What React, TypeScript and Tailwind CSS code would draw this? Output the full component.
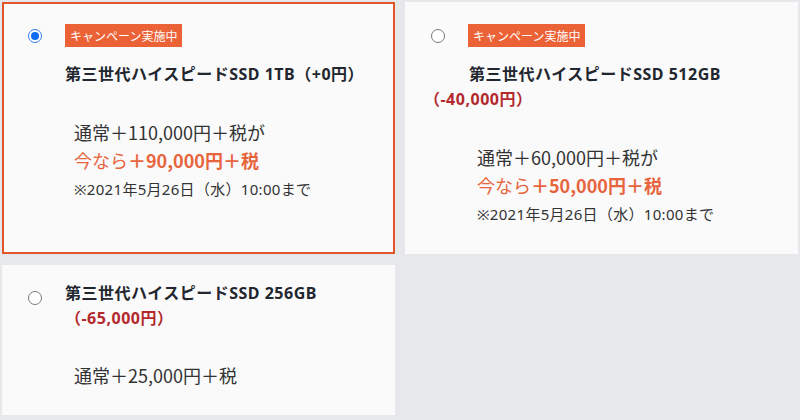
import React from 'react';

const font = { fontFamily: '"Noto Sans CJK JP", "Noto Sans", sans-serif' };
const latinFirst = { fontFamily: '"Noto Sans", "Noto Sans CJK JP", sans-serif' };

const Radio: React.FC<{ checked?: boolean; className?: string }> = ({ checked, className = '' }) =>
  checked ? (
    <span className={`flex shrink-0 items-center justify-center w-[14px] h-[14px] rounded-full border border-[#2f7de9] bg-white ${className}`}>
      <span className="w-[8px] h-[8px] rounded-full bg-[#0b6cf0]" />
    </span>
  ) : (
    <span className={`block shrink-0 w-[14px] h-[14px] rounded-full border border-[#7a7a7a] bg-white ${className}`} />
  );

const Badge: React.FC = () => (
  <span className="flex items-center h-[23px] px-[5px] bg-[#ec6237] text-white text-[12px] leading-none">
    キャンペーン実施中
  </span>
);

const Campaign: React.FC<{ normal: string; now: string }> = ({ normal, now }) => (
  <div className="mt-[31px] pl-[70px]">
    <p className="text-[18px] leading-[28px] text-[#333]">通常＋{normal}円＋税が</p>
    <p className="text-[18px] leading-[28px] text-[#e8643c]">
      今なら<span className="font-bold">＋{now}円＋税</span>
    </p>
    <p style={latinFirst} className="mt-[3px] text-[15px] leading-[24px] tracking-[0.3px] text-[#333]">
      ※2021年5月26日（水）10:00まで
    </p>
  </div>
);

export default function App() {
  return (
    <div style={font} className="h-[420px] w-[800px] bg-[#e6e8eb] p-[2px]">
      <div className="grid grid-cols-2 gap-x-[10px] gap-y-[11px]">
        <div className="h-[252px] border-2 border-[#e4552b] bg-[#fafafb]">
          <div className="mt-[20px] flex items-center h-[23px]">
            <Radio checked className="ml-[24px]" />
            <span className="ml-[23px]"><Badge /></span>
          </div>
          <p style={latinFirst} className="mt-[15px] pl-[61px] text-[16px] leading-[25px] tracking-[0.5px] font-bold text-[#22262e]">
            第三世代ハイスピードSSD 1TB（+0円）
          </p>
          <Campaign normal="110,000" now="90,000" />
        </div>

        <div className="h-[252px] border-2 border-transparent bg-[#fafafb]">
          <div className="mt-[20px] flex items-center h-[23px]">
            <Radio className="ml-[24px]" />
            <span className="ml-[23px]"><Badge /></span>
          </div>
          <p style={latinFirst} className="mt-[15px] pl-[17px] indent-[45px] text-[16px] leading-[25px] tracking-[0.5px] font-bold text-[#22262e]">
            第三世代ハイスピードSSD 512GB
            <span className="block indent-0 text-[#b3292d]">（-40,000円）</span>
          </p>
          <Campaign normal="60,000" now="50,000" />
        </div>

        <div className="h-[150px] border-2 border-transparent bg-[#fafafb]">
          <div className="mt-[14px] flex items-start">
            <Radio className="ml-[24px] mt-[10px]" />
            <p style={latinFirst} className="ml-[23px] text-[16px] leading-[25px] tracking-[0.5px] font-bold text-[#22262e]">
              第三世代ハイスピードSSD 256GB
              <span className="block text-[#b3292d]">（-65,000円）</span>
            </p>
          </div>
          <p className="mt-[30px] pl-[70px] text-[18px] leading-[28px] text-[#333]">通常＋25,000円＋税</p>
        </div>
      </div>
    </div>
  );
}
